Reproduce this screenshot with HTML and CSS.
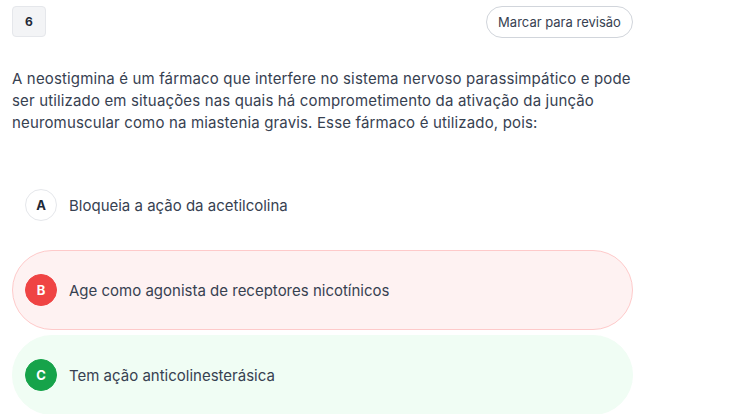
FILE: index.html
```html
<!DOCTYPE html>
<html lang="pt">
<head>
<meta charset="utf-8">
<link rel="stylesheet" href="styles.css">
</head>
<body>
<main class="question">
  <header class="q-head">
    <span class="q-num">6</span>
    <button class="q-mark">Marcar para revisão</button>
  </header>
  <p class="q-text">A neostigmina é um fármaco que interfere no sistema nervoso parassimpático e pode ser utilizado em situações nas quais há comprometimento da ativação da junção neuromuscular como na miastenia gravis. Esse fármaco é utilizado, pois:</p>
  <ul class="options">
    <li class="option">
      <span class="letter">A</span>
      <span class="opt-text">Bloqueia a ação da acetilcolina</span>
    </li>
    <li class="option wrong">
      <span class="letter">B</span>
      <span class="opt-text">Age como agonista de receptores nicotínicos</span>
    </li>
    <li class="option right">
      <span class="letter">C</span>
      <span class="opt-text">Tem ação anticolinesterásica</span>
    </li>
  </ul>
</main>
</body>
</html>
```
FILE: styles.css
```css
html, body {
  margin: 0;
  padding: 0;
  background: #ffffff;
}
body {
  font-family: "Inter", "Noto Sans", sans-serif;
  color: #374151;
}
.question {
  width: 621px;
  padding: 6px 0 0 12px;
}
.q-head {
  display: flex;
  justify-content: space-between;
  align-items: center;
  height: 31px;
}
.q-num {
  box-sizing: border-box;
  width: 34px;
  height: 31px;
  display: flex;
  align-items: center;
  justify-content: center;
  background: #f3f4f6;
  border: 1px solid #e5e7eb;
  border-radius: 4px;
  font-size: 12px;
  font-weight: 700;
  color: #1f2937;
}
.q-mark {
  box-sizing: border-box;
  height: 32px;
  width: 147px;
  padding: 0;
  background: #fff;
  border: 1px solid #d1d5db;
  border-radius: 999px;
  font-family: inherit;
  font-size: 13px;
  color: #374151;
}
.q-text {
  margin: 31px 0 0;
  font-size: 15px;
  line-height: 22px;
  letter-spacing: 0.15px;
  color: #374151;
}
.options {
  list-style: none;
  margin: 31px 0 0;
  padding: 0;
  display: flex;
  flex-direction: column;
  gap: 5px;
}
.option {
  box-sizing: border-box;
  height: 80px;
  display: flex;
  align-items: center;
  gap: 12px;
  padding: 0 12px;
  border: 1px solid transparent;
  border-radius: 40px;
}
.letter {
  box-sizing: border-box;
  width: 32px;
  height: 32px;
  border-radius: 50%;
  display: flex;
  align-items: center;
  justify-content: center;
  background: #fff;
  border: 1px solid #e5e7eb;
  font-size: 13px;
  font-weight: 700;
  color: #1f2937;
}
.opt-text {
  font-size: 15px;
  color: #374151;
}
.option.wrong {
  background: #fef2f2;
  border-color: #fecaca;
}
.option.wrong .letter {
  background: #ef4444;
  border-color: #ef4444;
  color: #fff;
}
.option.right {
  background: #f0fdf4;
  border-color: #f0fdf4;
}
.option.right .letter {
  background: #16a34a;
  border-color: #16a34a;
  color: #fff;
}
```
